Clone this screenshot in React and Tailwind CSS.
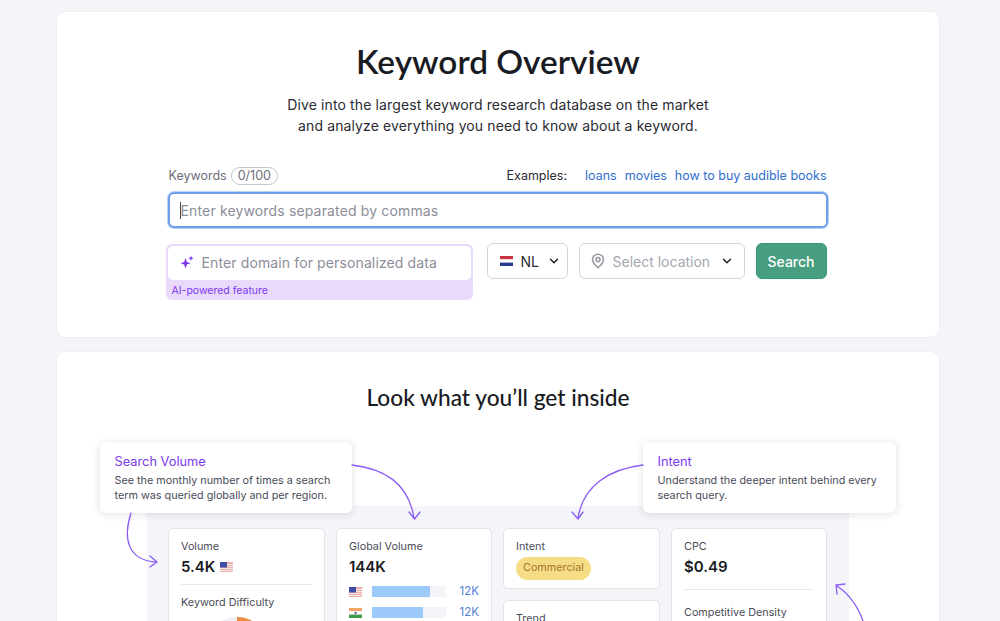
import React from "react";
import { ChevronDown } from "lucide-react";

const inter = "font-['Inter',sans-serif]";

function FlagNL() {
  return (
    <svg width="13" height="10" viewBox="0 0 13 10" className="shrink-0">
      <rect width="13" height="3.4" fill="#c8313e" />
      <rect y="3.4" width="13" height="3.2" fill="#fff" />
      <rect y="6.6" width="13" height="3.4" fill="#2a3a8c" />
    </svg>
  );
}

function FlagUS() {
  return (
    <svg width="13" height="10" viewBox="0 0 13 10" className="shrink-0">
      <rect width="13" height="10" fill="#e9b0ac" />
      <rect y="2" width="13" height="1" fill="#f6e6e4" />
      <rect y="4" width="13" height="1" fill="#f6e6e4" />
      <rect y="6" width="13" height="1" fill="#f6e6e4" />
      <rect y="8" width="13" height="1" fill="#f6e6e4" />
      <rect width="7" height="5.5" fill="#3f4fa8" />
    </svg>
  );
}

function FlagIN() {
  return (
    <svg width="13" height="10" viewBox="0 0 13 10" className="shrink-0">
      <rect width="13" height="3.4" fill="#f0a868" />
      <rect y="3.4" width="13" height="3.2" fill="#fff" />
      <rect y="6.6" width="13" height="3.4" fill="#3f9a4a" />
      <circle cx="6.5" cy="5" r="1.2" fill="#5a6ab0" />
    </svg>
  );
}

function Sparkle() {
  return (
    <svg width="14" height="14" viewBox="0 0 14 14" className="shrink-0">
      <path d="M5.5 3 L6.9 6.900 L10.500 8.200 L6.900 9.500 L5.500 13.500 L4.100 9.500 L0.500 8.200 L4.100 6.900 Z" fill="#7c3aed" />
      <path d="M11 0.500 L11.700 2.500 L13.700 3.200 L11.700 3.900 L11 5.900 L10.300 3.900 L8.300 3.200 L10.300 2.500 Z" fill="#7c3aed" />
    </svg>
  );
}

function Pin() {
  return (
    <svg width="14" height="16" viewBox="0 0 14 16" fill="none" className="shrink-0">
      <path d="M7 1.2C3.9 1.2 1.5 3.6 1.5 6.6c0 3.7 3.8 6.6 5.5 8 1.7-1.4 5.5-4.3 5.5-8 0-3-2.4-5.4-5.5-5.4Z" stroke="#9a9ba6" strokeWidth="1.6" />
      <circle cx="7" cy="6.6" r="2" stroke="#9a9ba6" strokeWidth="1.6" />
    </svg>
  );
}

function Callout({ title, className, children }) {
  return (
    <div className={`absolute top-[90px] h-[71px] rounded-md bg-white pl-[14.5px] pt-[11px] shadow-[0_1px_8px_rgba(25,27,35,0.14)] ${className}`}>
      <div className="text-[12.8px] leading-[17px] text-[#7c3aed]">{title}</div>
      <div className="mt-[4px] text-[10.8px] leading-[14.7px] text-[#4a4b57]">{children}</div>
    </div>
  );
}

function Bar({ flag, width }) {
  return (
    <div className="flex h-[21px] items-center">
      {flag}
      <div className="ml-[10px] h-[11px] w-[74px] rounded-[1px] bg-[#f4f5f9]">
        <div className="h-full bg-[#9ccbfb]" style={{ width }} />
      </div>
      <span className="ml-auto text-[11.5px] text-[#4f7fd6]">12K</span>
    </div>
  );
}

function Panel({ className, children }) {
  return <div className={`rounded-[5px] border border-[#e3e4ea] bg-white px-3 pt-[9px] ${className}`}>{children}</div>;
}

export default function App() {
  return (
    <div className={`flex h-[621px] flex-col gap-[15px] overflow-hidden bg-[#f4f5f9] pl-[57px] pr-[61px] pt-3 ${inter}`}>
      <section className="h-[325px] shrink-0 rounded-lg bg-white pt-[27px] shadow-[0_0_2px_rgba(25,27,35,0.08)]">
        <h1 className="text-center font-['Lato',sans-serif] text-[33.4px] font-semibold leading-[44px] text-[#191b23]">
          Keyword Overview
        </h1>
        <p className="mt-[11px] text-center text-[14px] leading-[21px] tracking-[0.12px] text-[#2a2b33]">
          Dive into the largest keyword research database on the market
          <br />
          and analyze everything you need to know about a keyword.
        </p>

        <div className="mx-auto mt-[31px] w-[659px]">
          <div className="flex h-[18px] items-center pr-px text-[12.5px]">
            <span className="text-[#6c6e79]">Keywords</span>
            <span className="ml-1 flex h-[18px] items-center rounded-full border border-[#c4c7cf] px-[6px] text-[#6c6e79]">0/100</span>
            <span className="ml-auto text-[#2a2b33]">Examples:</span>
            <a className="ml-[18px] text-[#2f6fd0]">loans</a>
            <a className="ml-2 text-[#2f6fd0]">movies</a>
            <a className="ml-2 text-[#2f6fd0]">how to buy audible books</a>
          </div>

          <div className="-ml-px mt-[7px] flex h-[36px] items-center rounded-md border-2 border-[#6e9ee8] bg-white pl-[10px] text-[14px] tracking-[0.15px] text-[#8b8d99] shadow-[0_0_0_1px_#bcd3f7]">
            <span className="h-[17px] w-px bg-[#4a4b57]" />
            Enter keywords separated by commas
          </div>

          <div className="mt-[15px] flex items-start">
            <div className="-ml-[3px] mt-px w-[307px] rounded-md bg-[#e9d9fb] p-[2px] pb-0">
              <div className="flex h-[34px] items-center rounded-[5px] bg-white pb-[2px] pl-[12px] text-[14px] tracking-[0.12px] text-[#8b8d99]">
                <Sparkle />
                <span className="ml-[8px]">Enter domain for personalized data</span>
              </div>
              <div className="flex h-[20px] items-center pl-[4px] pt-px text-[10.5px] text-[#7c3aed]">AI-powered feature</div>
            </div>

            <button className="ml-[14px] flex h-[36px] w-[81px] items-center rounded-md border border-[#d5d6dd] bg-white pl-[12px] text-[14px] text-[#2a2b33]">
              <FlagNL />
              <span className="ml-[8px]">NL</span>
              <ChevronDown size={14} strokeWidth={2.4} className="ml-[8px] text-[#191b23]" />
            </button>

            <button className="ml-[11px] flex h-[36px] w-[166px] items-center rounded-md border border-[#d5d6dd] bg-white pl-[11px] text-[14px] text-[#a4a6b1]">
              <Pin />
              <span className="ml-[8px]">Select location</span>
              <ChevronDown size={14} strokeWidth={2.4} className="ml-auto mr-[10px] text-[#191b23]" />
            </button>

            <button className="ml-[11px] flex h-[36px] w-[71px] items-center justify-center rounded-md border border-[#2f9a78] bg-[#479e80] text-[14px] font-medium text-white">
              Search
            </button>
          </div>
        </div>
      </section>

      <section className="relative flex-1 rounded-t-lg bg-white shadow-[0_0_2px_rgba(25,27,35,0.08)]">
        <h2 className="pt-[30px] text-center font-['Lato',sans-serif] text-[22.7px] font-medium leading-[32px] text-[#191b23]">
          Look what you’ll get inside
        </h2>

        <div className="mx-[90px] mt-[92px] grid h-[200px] grid-cols-[157px_156px_157px_156px] items-start gap-[11px] bg-[#f4f5f9] px-[21px] pt-[22px] text-[10.8px] text-[#4a4b57]">
          <Panel className="h-[180px]">
            <div className="leading-[17px]">Volume</div>
            <div className="mt-[1px] flex items-center gap-[5px] text-[15px] font-semibold leading-[22px] text-[#191b23]">
              5.4K <FlagUS />
            </div>
            <div className="mt-[6px] h-px bg-[#e8e9ee]" />
            <div className="mt-[9px] leading-[17px]">Keyword Difficulty</div>
            <svg width="60" height="60" viewBox="0 0 60 60" className="ml-[26px] mt-[6px]" fill="none">
              <circle cx="30" cy="30" r="25" stroke="#f0f1f5" strokeWidth="10" />
              <path d="M30 5 A25 25 0 0 1 55 30" stroke="#f08b3e" strokeWidth="10" />
            </svg>
          </Panel>

          <Panel className="h-[180px]">
            <div className="leading-[17px]">Global Volume</div>
            <div className="mt-[1px] text-[15px] font-semibold leading-[22px] text-[#191b23]">144K</div>
            <div className="mt-[3px]">
              <Bar flag={<FlagUS />} width="58px" />
              <Bar flag={<FlagIN />} width="51px" />
            </div>
          </Panel>

          <div className="flex flex-col gap-[11px]">
            <Panel className="h-[61px]">
              <div className="leading-[17px]">Intent</div>
              <span className="mt-[2px] inline-flex h-[23px] items-center rounded-full bg-[#f6dc85] px-[7px] text-[#a5762c]">Commercial</span>
            </Panel>
            <Panel className="h-[80px]">
              <div className="leading-[17px]">Trend</div>
            </Panel>
          </div>

          <Panel className="h-[180px]">
            <div className="leading-[17px]">CPC</div>
            <div className="mt-[1px] text-[15px] font-semibold leading-[22px] text-[#191b23]">$0.49</div>
            <div className="mt-[11px] h-px bg-[#e8e9ee]" />
            <div className="mt-[14px] leading-[17px]">Competitive Density</div>
          </Panel>
        </div>

        <Callout title="Search Volume" className="left-[43px] w-[252px]">
          See the monthly number of times a search
          <br />
          term was queried globally and per region.
        </Callout>
        <Callout title="Intent" className="left-[586px] w-[253px]">
          Understand the deeper intent behind every
          <br />
          search query.
        </Callout>

        {/* arrows from the callouts to the panels */}
        <svg className="pointer-events-none absolute left-0 top-0" width="882" height="269" fill="none" stroke="#8b5cf6" strokeWidth="1.3" strokeLinecap="round" strokeLinejoin="round">
          <path d="M295 113C330 117 352 134 357 166" />
          <path d="M352 160L357.500 167L363 160" />
          <path d="M74 161C66 186 70 208 99 210" />
          <path d="M93 204L100 210L93 215" />
          <path d="M586 113C552 117 526 134 521 166" />
          <path d="M515 160L521 167L526 160" />
          <path d="M806 269C801 255 792 242 780 234" />
          <path d="M780 242L779 233L788 232" />
        </svg>
      </section>
    </div>
  );
}
